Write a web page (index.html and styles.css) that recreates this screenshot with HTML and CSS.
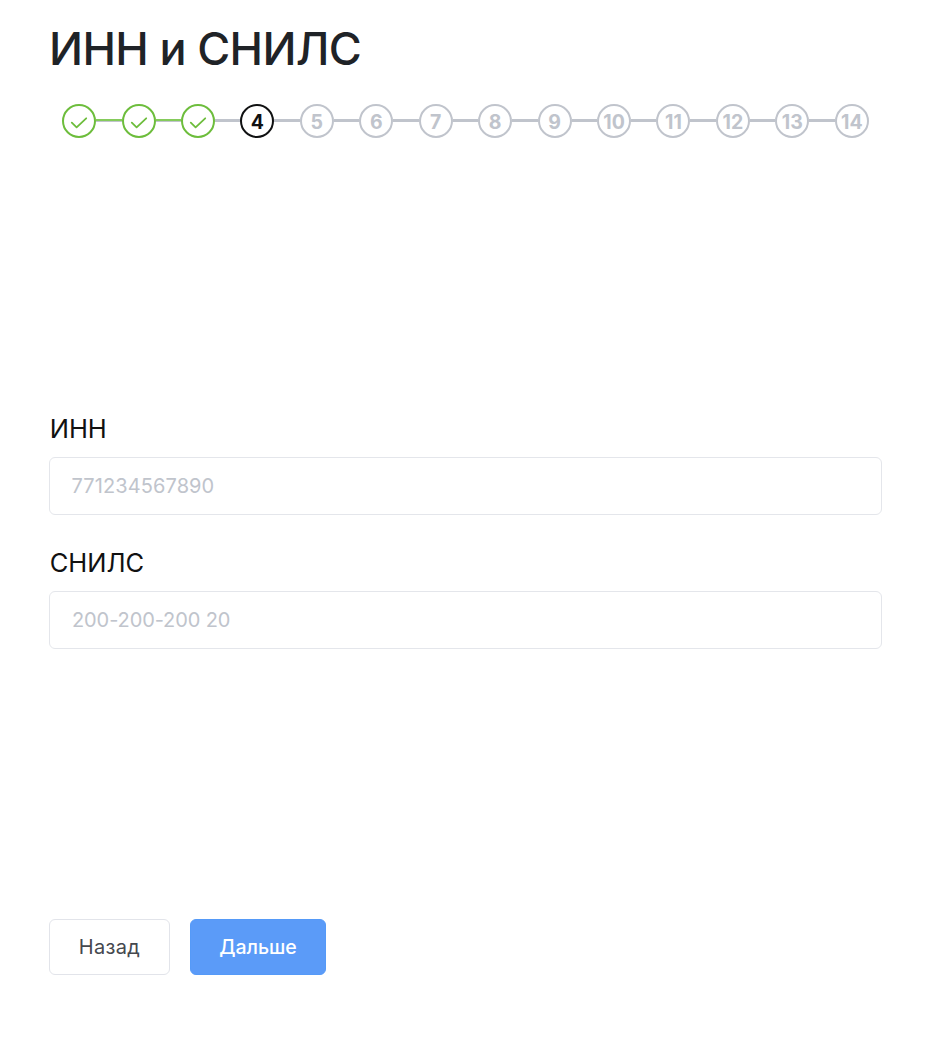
FILE: index.html
```html
<!DOCTYPE html>
<html lang="ru">
<head>
<meta charset="utf-8">
<title>ИНН и СНИЛС</title>
<link rel="stylesheet" href="styles.css">
</head>
<body>
<main class="page">
  <h1 class="title">ИНН и СНИЛС</h1>
  <ol class="steps">
    <li class="step done"><span class="dot"><svg class="check" viewBox="0 0 20 20"><path d="M2.8 10.7 7.6 15.3 17.2 6.3"/></svg></span></li>
    <li class="step done"><span class="dot"><svg class="check" viewBox="0 0 20 20"><path d="M2.8 10.7 7.6 15.3 17.2 6.3"/></svg></span></li>
    <li class="step done"><span class="dot"><svg class="check" viewBox="0 0 20 20"><path d="M2.8 10.7 7.6 15.3 17.2 6.3"/></svg></span></li>
    <li class="step current"><span class="dot">4</span></li>
    <li class="step"><span class="dot">5</span></li>
    <li class="step"><span class="dot">6</span></li>
    <li class="step"><span class="dot">7</span></li>
    <li class="step"><span class="dot">8</span></li>
    <li class="step"><span class="dot">9</span></li>
    <li class="step"><span class="dot">10</span></li>
    <li class="step"><span class="dot">11</span></li>
    <li class="step"><span class="dot">12</span></li>
    <li class="step"><span class="dot">13</span></li>
    <li class="step"><span class="dot">14</span></li>
  </ol>
  <form class="form">
    <label class="label" for="inn">ИНН</label>
    <input class="input inn" id="inn" type="text" placeholder="771234567890">
    <label class="label" for="snils">СНИЛС</label>
    <input class="input" id="snils" type="text" placeholder="200-200-200 20">
  </form>
  <div class="actions">
    <button class="btn" type="button">Назад</button>
    <button class="btn primary" type="button">Дальше</button>
  </div>
</main>
</body>
</html>
```
FILE: styles.css
```css
* { box-sizing: border-box; }
body { margin: 0; background: #fff; font-family: Inter, sans-serif; color: #1f2327; }
.page { height: 1050px; padding: 21px 50px 0 49px; display: flex; flex-direction: column; }
.title { margin: 0; height: 56px; line-height: 56px; font-size: 45px; font-weight: 500; letter-spacing: -0.65px; }
.steps { list-style: none; margin: 27px 0 0; padding: 0 0 0 13.1px; display: flex; }
.step { flex: none; width: 59.45px; display: flex; align-items: center; color: #c0c4cc; }
.step:last-child { width: 34px; }
.step::after { content: ""; flex: 1; height: 3px; margin-bottom: 1px; background: #c0c4cc; }
.step:last-child::after { display: none; }
.dot { width: 34px; height: 34px; padding-top: 1px; border: 2px solid currentColor; border-radius: 50%; display: flex; align-items: center; justify-content: center; font-size: 19.5px; line-height: 24px; font-weight: 700; }
.done { color: #6dbd3c; }
.done::after { background: linear-gradient(#85cb5b 2px, #c0c4cc 2px); }
.done:nth-child(3)::after { background: #c0c4cc; }
.current { color: #101112; }
.check { width: 20px; height: 20px; fill: none; stroke: currentColor; stroke-width: 1.8; stroke-linecap: round; stroke-linejoin: round; }
.form { margin-top: 273px; display: flex; flex-direction: column; }
.label { height: 36px; line-height: 36px; margin-bottom: 10px; padding-left: 0.7px; font-size: 25.5px; color: #111; }
.input { height: 58px; margin: 0 0 30px; padding: 0 22px; border: 1px solid #e4e6eb; border-radius: 6px; font-family: inherit; font-size: 20px; letter-spacing: -0.1px; outline: none; }
.input.inn { padding-left: 21.5px; letter-spacing: 0.1px; }
.input::placeholder { color: #c0c4cc; opacity: 1; }
.actions { display: flex; gap: 20px; margin-top: 240px; }
.btn { width: 121px; height: 56px; padding: 0; border: 1px solid #e2e4ea; border-radius: 6px; background: #fff; color: #45484e; font-family: inherit; font-size: 20px; letter-spacing: 0.3px; }
.primary { width: 136px; border-color: #559af8; background: #5b9bf8; color: #fff; font-weight: 500; font-size: 19.5px; letter-spacing: 0; }
```
